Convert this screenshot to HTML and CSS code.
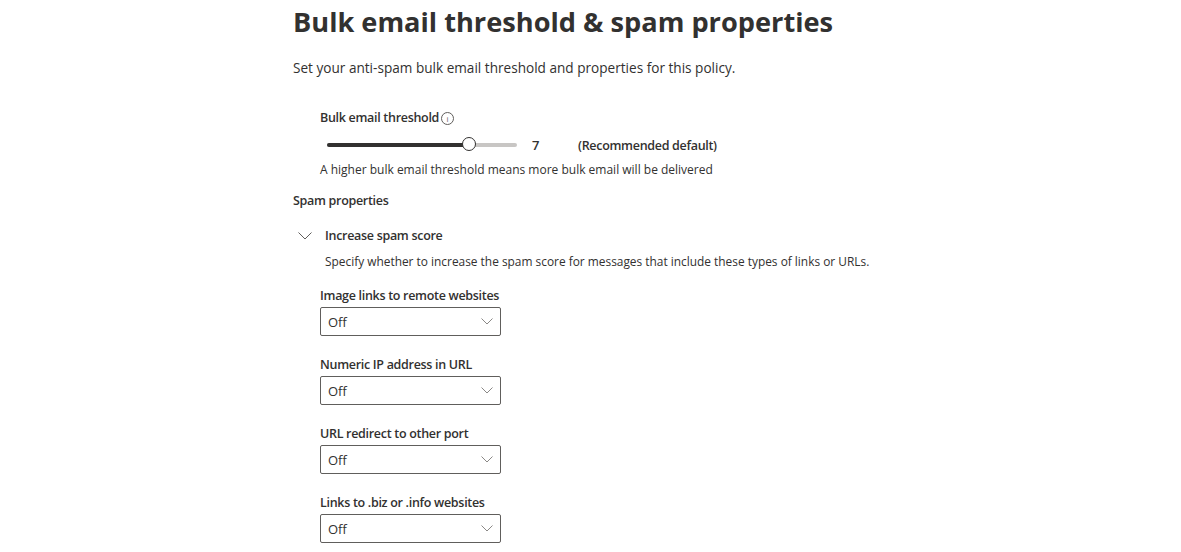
FILE: index.html
```html
<!DOCTYPE html>
<html lang="en">

<head>
    <meta charset="UTF-8">
    <meta name="viewport" content="width=device-width, initial-scale=1.0">
    <title>Bulk email threshold</title>
    <link rel="stylesheet" href="styles.css">
</head>

<body>
    <div class="page">
        <h1 class="title">Bulk email threshold &amp; spam properties</h1>
        <p class="intro">Set your anti-spam bulk email threshold and properties for this policy.</p>

        <!-- Thanh truot nguong email -->
        <div class="threshold">
            <p class="label">Bulk email threshold<span class="info-icon">i</span></p>
            <div class="slider-row">
                <div class="slider">
                    <div class="slider-fill" style="width: 143px"></div>
                    <div class="slider-thumb" style="left: 143px"></div>
                </div>
                <span class="slider-value">7</span>
                <span class="slider-note">(Recommended default)</span>
            </div>
            <p class="hint">A higher bulk email threshold means more bulk email will be delivered</p>
        </div>

        <p class="section-title">Spam properties</p>

        <!-- Nhom tang diem spam -->
        <div class="group">
            <div class="group-head">
                <svg class="chevron" width="14" height="8" viewBox="0 0 14 8">
                    <path d="M0.5 0.5 L7 7 L13.5 0.5" fill="none" stroke="#605e5c" stroke-width="1" />
                </svg>
                <span>Increase spam score</span>
            </div>
            <p class="group-desc">Specify whether to increase the spam score for messages that include these types of links or URLs.</p>

            <div class="field">
                <p class="field-label">Image links to remote websites</p>
                <div class="dropdown"><span>Off</span><svg class="caret" width="12" height="7" viewBox="0 0 12 7"><path d="M0.5 0.5 L6 6 L11.5 0.5" fill="none" stroke="#8a8886" stroke-width="1" /></svg></div>
            </div>
            <div class="field">
                <p class="field-label">Numeric IP address in URL</p>
                <div class="dropdown"><span>Off</span><svg class="caret" width="12" height="7" viewBox="0 0 12 7"><path d="M0.5 0.5 L6 6 L11.5 0.5" fill="none" stroke="#8a8886" stroke-width="1" /></svg></div>
            </div>
            <div class="field">
                <p class="field-label">URL redirect to other port</p>
                <div class="dropdown"><span>Off</span><svg class="caret" width="12" height="7" viewBox="0 0 12 7"><path d="M0.5 0.5 L6 6 L11.5 0.5" fill="none" stroke="#8a8886" stroke-width="1" /></svg></div>
            </div>
            <div class="field">
                <p class="field-label">Links to .biz or .info websites</p>
                <div class="dropdown"><span>Off</span><svg class="caret" width="12" height="7" viewBox="0 0 12 7"><path d="M0.5 0.5 L6 6 L11.5 0.5" fill="none" stroke="#8a8886" stroke-width="1" /></svg></div>
            </div>
        </div>
    </div>
</body>

</html>
```

FILE: styles.css
```css
body {
    margin: 0;
    background: #ffffff;
    color: #323130;
    font-family: "Open Sans", "Noto Sans", sans-serif;
}

p {
    margin: 0;
}

.page {
    padding-left: 293px;
    padding-top: 2px;
}

.title {
    margin: 0;
    font-size: 27.2px;
    line-height: 40px;
    font-weight: 700;
}

.intro {
    margin-top: 16px;
    font-size: 13.6px;
    line-height: 20px;
}

.threshold {
    margin-left: 27px;
    margin-top: 30px;
}

.label {
    font-size: 12.5px;
    line-height: 20px;
    font-weight: 600;
    letter-spacing: -0.3px;
    display: flex;
    align-items: center;
}

.info-icon {
    width: 11px;
    height: 11px;
    border: 1px solid #605e5c;
    border-radius: 50%;
    margin-left: 2px;
    font-size: 8px;
    line-height: 11px;
    text-align: center;
    font-weight: 400;
    letter-spacing: 0;
    color: #605e5c;
}

.slider-row {
    margin-top: 7px;
    height: 20px;
    display: flex;
    align-items: center;
}

.slider {
    position: relative;
    margin-left: 7px;
    width: 190px;
    height: 4px;
    border-radius: 2px;
    background: #c8c6c4;
}

.slider-fill {
    height: 4px;
    border-radius: 2px;
    background: #323130;
}

.slider-thumb {
    position: absolute;
    top: -6px;
    width: 12px;
    height: 12px;
    margin-left: -8px;
    border: 1.5px solid #323130;
    border-radius: 50%;
    background: #ffffff;
}

.slider-value {
    margin-left: 15px;
    width: 46px;
    font-size: 13px;
    font-weight: 600;
}

.slider-note {
    font-size: 12.5px;
    font-weight: 600;
    letter-spacing: -0.3px;
}

.hint {
    margin-top: 5px;
    font-size: 12px;
    line-height: 20px;
}

.section-title {
    margin-top: 11px;
    font-size: 12.5px;
    line-height: 20px;
    font-weight: 600;
    letter-spacing: -0.3px;
}

.group-head {
    margin-top: 15px;
    display: flex;
    align-items: center;
    font-size: 12.5px;
    line-height: 20px;
    font-weight: 600;
    letter-spacing: -0.3px;
}

.chevron {
    margin-left: 5px;
    margin-right: 13px;
}

.group-desc {
    margin-top: 5px;
    margin-left: 32px;
    font-size: 11.9px;
    line-height: 20px;
}

.field {
    margin-left: 27px;
    margin-top: 15px;
}

.field + .field {
    margin-top: 19px;
}

.field-label {
    font-size: 12.5px;
    line-height: 20px;
    font-weight: 600;
    letter-spacing: -0.3px;
}

.dropdown {
    margin-top: 1px;
    width: 165px;
    height: 27px;
    border: 1px solid #605e5c;
    border-radius: 2px;
    display: flex;
    align-items: center;
    justify-content: space-between;
    padding: 0 7px 0 7px;
    font-size: 13px;
}

.caret {
    margin-top: -1px;
}
```
